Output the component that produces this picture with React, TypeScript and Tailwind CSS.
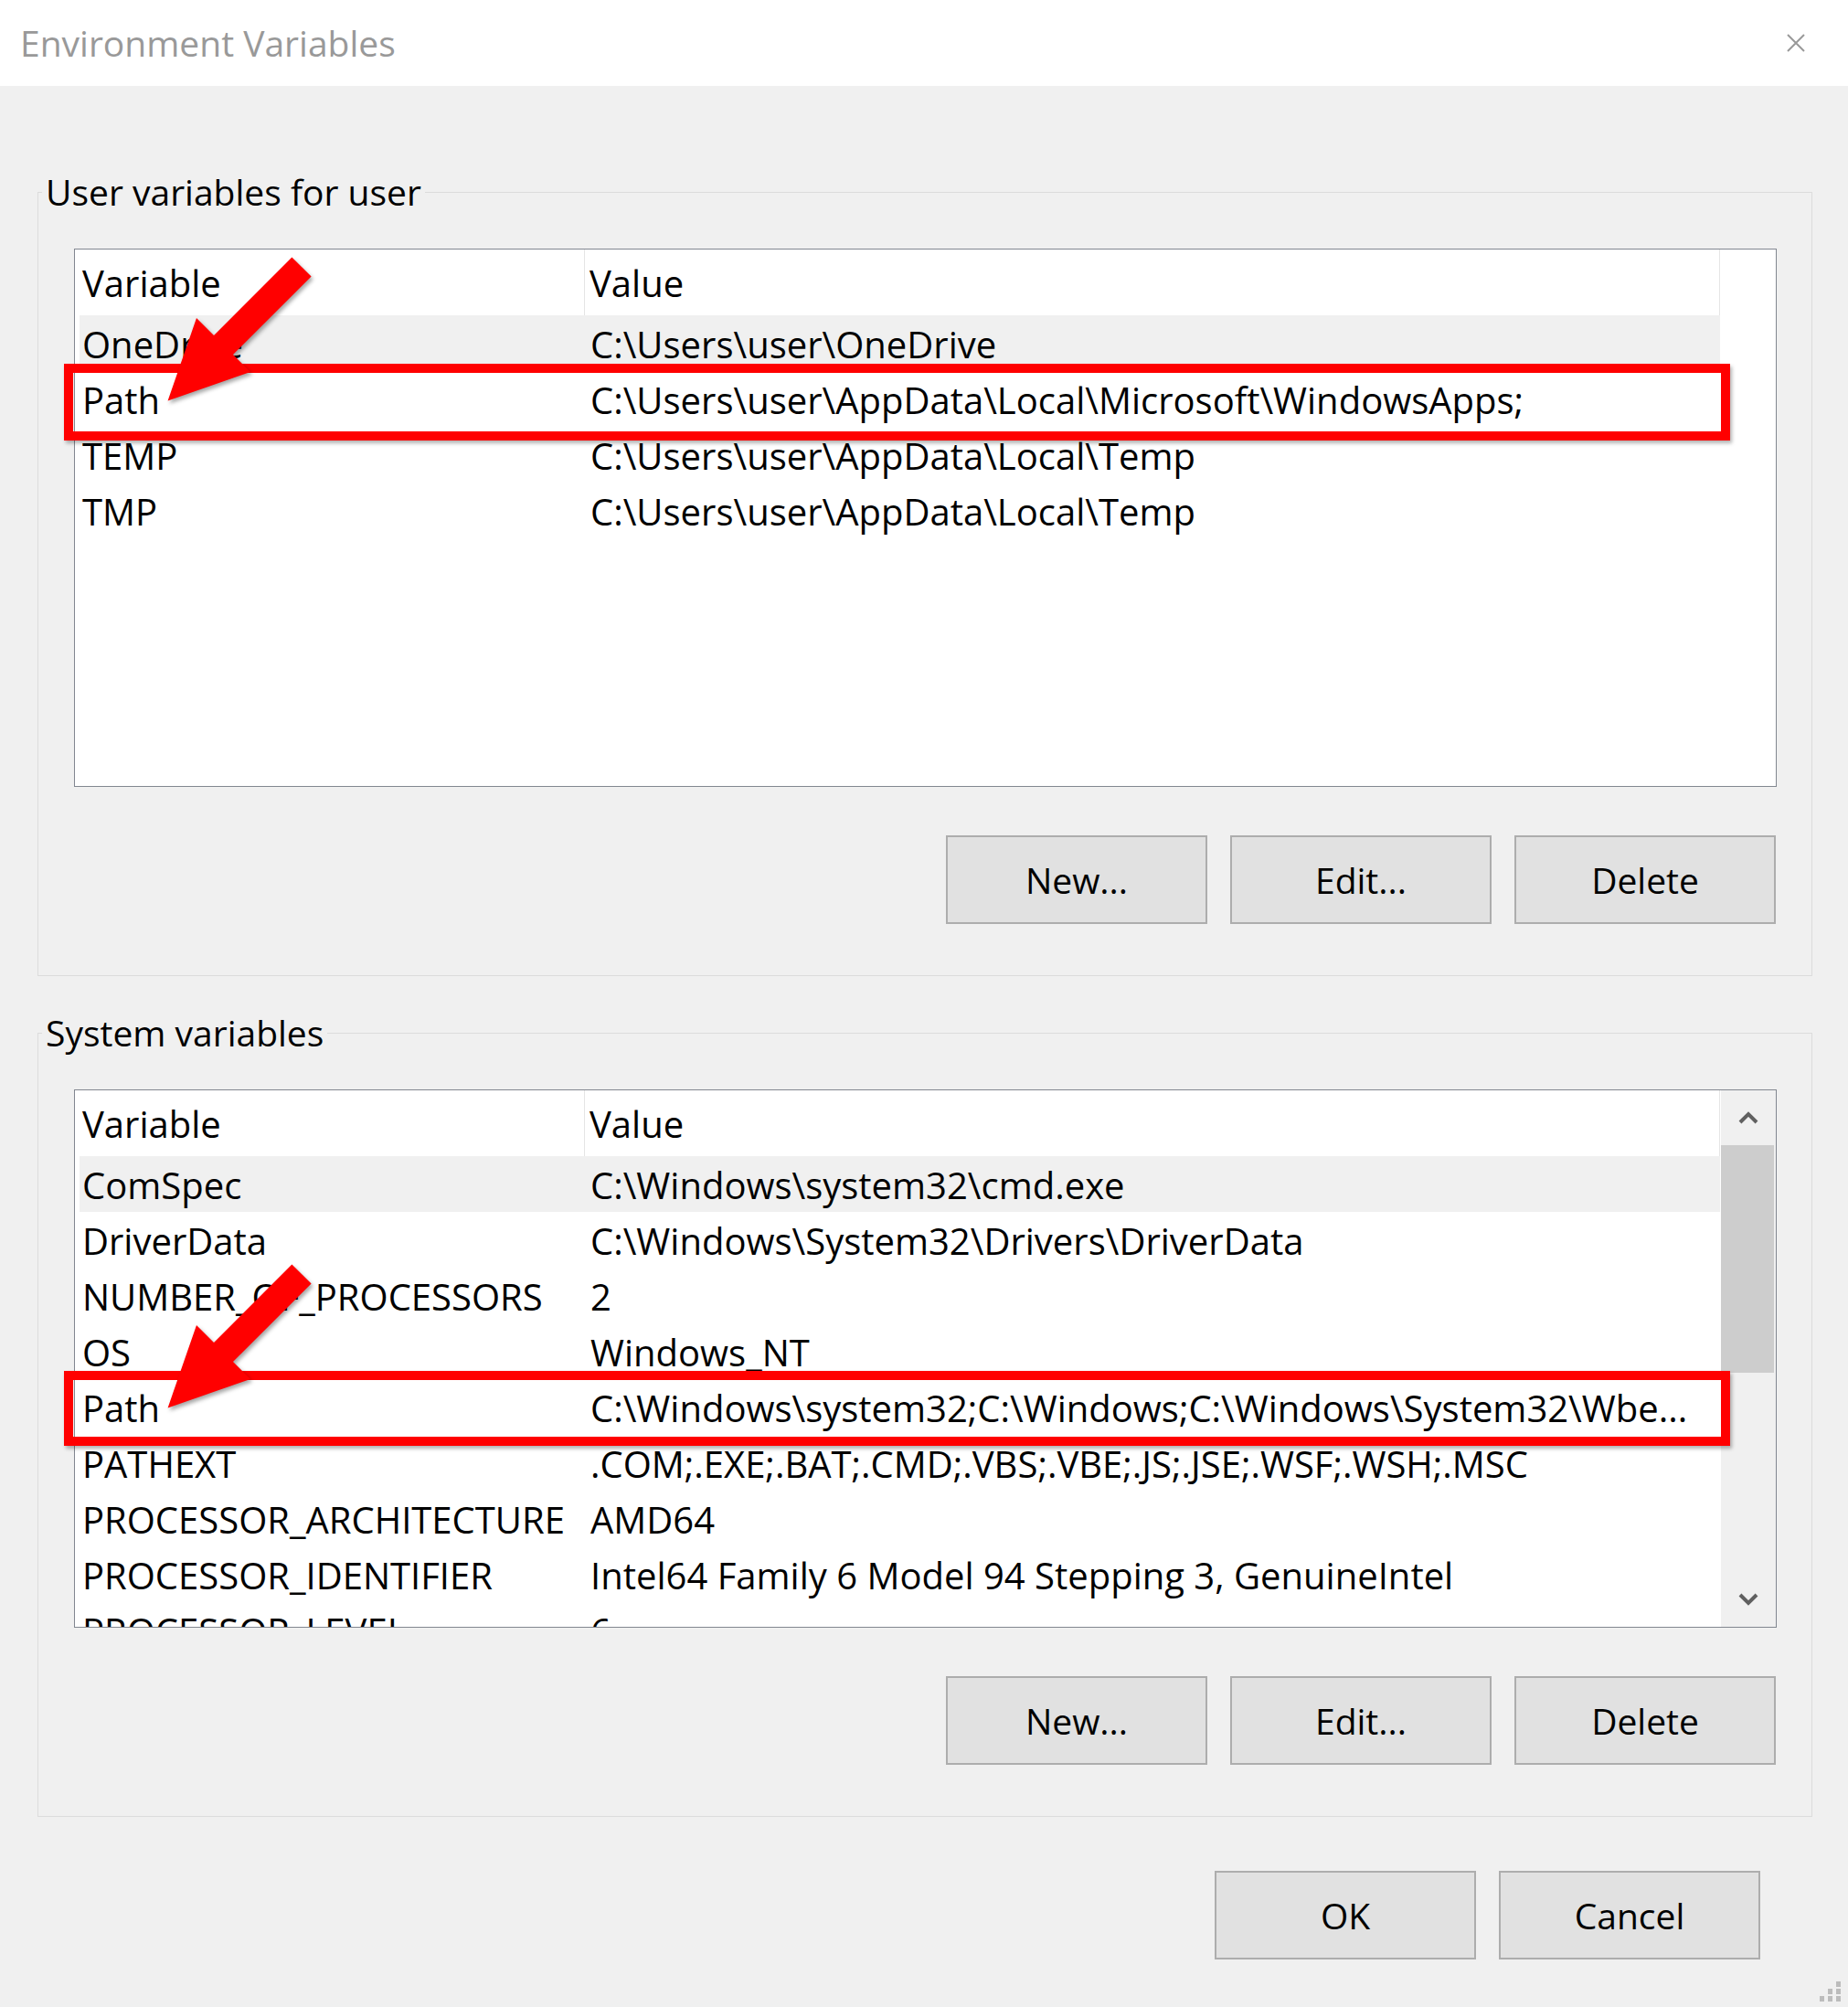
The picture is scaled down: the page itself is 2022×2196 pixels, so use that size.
import React from 'react';

type Row = [string, string];

const userVars: Row[] = [
  ['OneDrive', 'C:\\Users\\user\\OneDrive'],
  ['Path', 'C:\\Users\\user\\AppData\\Local\\Microsoft\\WindowsApps;'],
  ['TEMP', 'C:\\Users\\user\\AppData\\Local\\Temp'],
  ['TMP', 'C:\\Users\\user\\AppData\\Local\\Temp'],
];

const systemVars: Row[] = [
  ['ComSpec', 'C:\\Windows\\system32\\cmd.exe'],
  ['DriverData', 'C:\\Windows\\System32\\Drivers\\DriverData'],
  ['NUMBER_OF_PROCESSORS', '2'],
  ['OS', 'Windows_NT'],
  ['Path', 'C:\\Windows\\system32;C:\\Windows;C:\\Windows\\System32\\Wbe...'],
  ['PATHEXT', '.COM;.EXE;.BAT;.CMD;.VBS;.VBE;.JS;.JSE;.WSF;.WSH;.MSC'],
  ['PROCESSOR_ARCHITECTURE', 'AMD64'],
  ['PROCESSOR_IDENTIFIER', 'Intel64 Family 6 Model 94 Stepping 3, GenuineIntel'],
  ['PROCESSOR_LEVEL', '6'],
];

function Button({ label }: { label: string }) {
  return (
    <button className="w-[286px] h-[97px] bg-[#e1e1e1] border-2 border-[#adadad] text-[39px] leading-none text-black flex items-center justify-center">
      {label}
    </button>
  );
}

function Chevron({ up }: { up?: boolean }) {
  return (
    <svg width="22" height="14" viewBox="0 0 22 14">
      <polyline
        points={up ? '2,12 11,3 20,12' : '2,2 11,11 20,2'}
        fill="none"
        stroke="#606060"
        strokeWidth={4}
      />
    </svg>
  );
}

function VarList({ rows, scroll }: { rows: Row[]; scroll?: boolean }) {
  return (
    <div className="ml-[39px] mt-[38px] w-[1863px] h-[589px] border border-[#828790] bg-white flex overflow-hidden text-[40px]">
      <div className="flex-1 overflow-hidden">
        {/* column header */}
        <div className="flex h-[72px] w-[1800px] bg-white">
          <div className="w-[558px] pl-[8px] pt-[2px] flex items-center border-r border-[#e5e5e5]">Variable</div>
          <div className="w-[1242px] pl-[5px] pt-[2px] flex items-center border-r border-[#e5e5e5]">Value</div>
        </div>
        {rows.map(([name, value], i) => (
          <div
            key={name}
            className={`ml-[5px] w-[1795px] h-[61px] pt-[2px] flex items-center whitespace-nowrap ${i === 0 ? 'bg-[#f0f0f0]' : ''}`}
          >
            <div className="w-[556px] pl-[3px]">{name}</div>
            <div className="pl-[3px]">{value}</div>
          </div>
        ))}
      </div>
      {scroll && (
        <div className="w-[60px] bg-[#f0f0f0] flex flex-col">
          <div className="h-[60px] flex items-center justify-center">
            <Chevron up />
          </div>
          <div className="h-[249px] mr-[2px] bg-[#cdcdcd]" />
          <div className="flex-1" />
          <div className="h-[60px] flex items-center justify-center">
            <Chevron />
          </div>
        </div>
      )}
    </div>
  );
}

function Group({ title, rows, scroll, className }: { title: string; rows: Row[]; scroll?: boolean; className: string }) {
  return (
    <div className={`w-[1942px] h-[858px] border border-[#dcdcdc] ${className}`}>
      <div className="-mt-[25px] ml-[4px] w-fit bg-[#f0f0f0] px-[4px] leading-[48px]">{title}</div>
      <VarList rows={rows} scroll={scroll} />
      <div className="mt-[53px] pr-[39px] flex justify-end gap-[25px]">
        <Button label="New..." />
        <Button label="Edit..." />
        <Button label="Delete" />
      </div>
    </div>
  );
}

function Arrow({ className }: { className: string }) {
  return (
    <svg
      width="170"
      height="170"
      viewBox="0 0 170 170"
      className={`absolute drop-shadow-[2px_3px_2px_rgba(0,0,0,0.35)] ${className}`}
    >
      <polygon
        points="141.4,5.4 162.6,26.6 77,112 96,131 5.6,162.4 37,72 56,91"
        fill="#ff0000"
      />
    </svg>
  );
}

export default function App() {
  return (
    <div className="relative w-[2022px] h-[2196px] bg-[#f0f0f0] overflow-hidden font-['Open_Sans',sans-serif] text-[39px] text-black">
      {/* title bar */}
      <div className="h-[94px] bg-white flex items-center justify-between pl-[22px] pr-[47px]">
        <span className="text-[#999999] leading-none -mt-[2px]">Environment Variables</span>
        <svg width="20" height="20" viewBox="0 0 20 20">
          <path d="M1 1L19 19M19 1L1 19" stroke="#999999" strokeWidth={2} />
        </svg>
      </div>

      <div className="pl-[41px]">
        <Group title="User variables for user" rows={userVars} className="mt-[116px]" />
        <Group title="System variables" rows={systemVars} scroll className="mt-[62px]" />
      </div>

      <div className="mt-[59px] pr-[96px] flex justify-end gap-[25px]">
        <Button label="OK" />
        <Button label="Cancel" />
      </div>

      {/* annotations */}
      <div className="absolute left-[70px] top-[398px] w-[1823px] h-[84px] border-[10px] border-[#ff0000] shadow-[2px_3px_4px_rgba(0,0,0,0.3)]" />
      <div className="absolute left-[70px] top-[1500px] w-[1823px] h-[82px] border-[10px] border-[#ff0000] shadow-[2px_3px_4px_rgba(0,0,0,0.3)]" />
      <Arrow className="left-[178px] top-[276px]" />
      <Arrow className="left-[178px] top-[1378px]" />

      {/* resize grip */}
      <svg width="23" height="22" viewBox="0 0 23 22" className="absolute right-[8px] bottom-[6px]">
        <rect x="18" y="0" width="5" height="6" fill="#bcbcbc" />
        <rect x="9" y="8" width="5" height="6" fill="#bcbcbc" />
        <rect x="18" y="8" width="5" height="6" fill="#bcbcbc" />
        <rect x="0" y="16" width="5" height="6" fill="#bcbcbc" />
        <rect x="9" y="16" width="5" height="6" fill="#bcbcbc" />
        <rect x="18" y="16" width="5" height="6" fill="#bcbcbc" />
      </svg>
    </div>
  );
}
